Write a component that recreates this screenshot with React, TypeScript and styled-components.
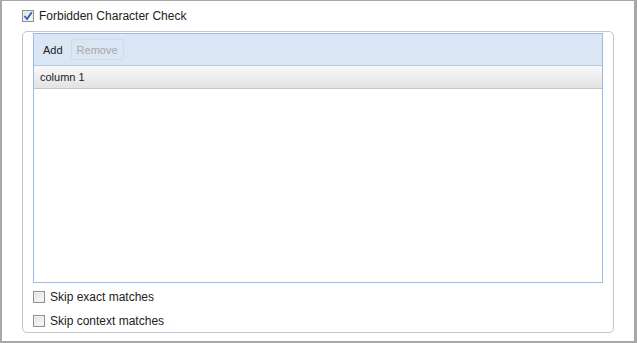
import styled, { createGlobalStyle } from 'styled-components';

const GlobalStyle = createGlobalStyle`
  html, body {
    margin: 0;
    padding: 0;
    background: #fff;
  }
  body {
    font-family: 'Liberation Sans', Arial, sans-serif;
    font-size: 12px;
    color: #222;
  }
`;

const Frame = styled.div`
  width: 637px;
  height: 343px;
  box-sizing: border-box;
  border-top: 1px solid #a8a8a8;
  border-left: 2px solid #a8a8a8;
  border-right: 3px solid #a8a8a8;
  border-bottom: 2px solid #a8a8a8;
  background: #fff;
  padding: 9px 0 0 20px;
`;

const CheckRow = styled.label<{ gap?: number }>`
  display: flex;
  align-items: center;
  height: 12px;
  gap: 5px;
  margin-bottom: ${({ gap }) => gap ?? 0}px;
  cursor: default;
`;

const Box = styled.span`
  width: 10px;
  height: 10px;
  box-sizing: content-box;
  border: 1px solid #8e8f8f;
  background: linear-gradient(135deg, #dcdcdc 0%, #f2f2f2 60%, #fbfbfb 100%);
  box-shadow: inset 0 0 0 1px #f0f0f0;
  display: flex;
  align-items: center;
  justify-content: center;
  flex: 0 0 auto;
`;

const Group = styled.div`
  width: 592px;
  height: 302px;
  box-sizing: border-box;
  margin-top: 9px;
  border: 1px solid #c3c3d2;
  border-radius: 5px;
  padding: 1px 10px 0 10px;
`;

const Grid = styled.div`
  width: 570px;
  height: 250px;
  box-sizing: border-box;
  border: 1px solid #99bbe8;
  display: flex;
  flex-direction: column;
  background: #fff;
`;

const Toolbar = styled.div`
  height: 31px;
  background: #dae6f4;
  border-bottom: 1px solid #b4c8de;
  display: flex;
  align-items: center;
  padding: 0 3px;
`;

const ToolButton = styled.button<{ disabled?: boolean }>`
  font: inherit;
  font-size: 11px;
  height: 21px;
  padding: 0 5px;
  background: transparent;
  border: 1px solid ${({ disabled }) => (disabled ? '#d0dcea' : 'transparent')};
  border-radius: 2px;
  color: ${({ disabled }) => (disabled ? '#a8a8a8' : '#222')};
  margin-right: 2px;
  cursor: default;
`;

const HeaderRow = styled.div`
  height: 22px;
  background: linear-gradient(#f9f9f9, #e3e3e3);
  border-bottom: 1px solid #c5c5c5;
  display: flex;
  align-items: center;
  padding-left: 6px;
  font-size: 11px;
`;

const Body = styled.div`
  flex: 1;
`;

const Options = styled.div`
  padding: 8px 0 0 0;
`;

const Label = styled.span`
  font-size: 12px;
  line-height: 12px;
`;

function Check({ checked }: { checked?: boolean }) {
  return (
    <Box>
      {checked && (
        <svg width="10" height="10" viewBox="0 0 10 10">
          <path d="M1.5 5 L4 8 L8.8 1.2" fill="none" stroke="#2e5fb4" strokeWidth="1.8" />
        </svg>
      )}
    </Box>
  );
}

export default function App() {
  return (
    <>
      <GlobalStyle />
      <Frame>
        <CheckRow>
          <Check checked />
          <Label>Forbidden Character Check</Label>
        </CheckRow>
        <Group>
          <Grid>
            <Toolbar>
              <ToolButton>Add</ToolButton>
              <ToolButton disabled>Remove</ToolButton>
            </Toolbar>
            <HeaderRow>column 1</HeaderRow>
            <Body />
          </Grid>
          <Options>
            <CheckRow gap={12}>
              <Check />
              <Label>Skip exact matches</Label>
            </CheckRow>
            <CheckRow>
              <Check />
              <Label>Skip context matches</Label>
            </CheckRow>
          </Options>
        </Group>
      </Frame>
    </>
  );
}
